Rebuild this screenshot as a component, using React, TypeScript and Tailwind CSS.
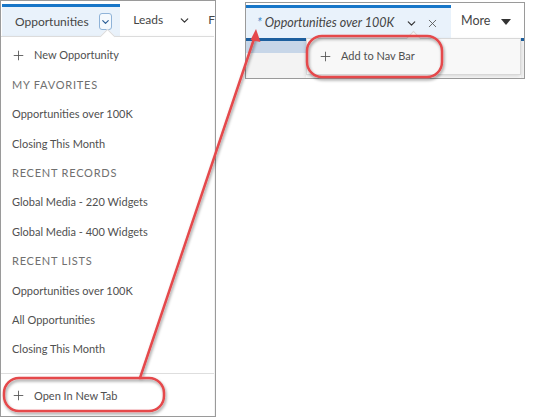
import { Plus, ChevronDown, X } from 'lucide-react'

const font = { fontFamily: 'Lato, "Open Sans", sans-serif' }

function Item({ label, plus }: { label: string; plus?: boolean }) {
  return (
    <div className="flex items-center h-[29.4px] px-[11px] text-[11px] text-[#505050]">
      {plus && <Plus className="w-[15px] h-[15px] ml-[-1px] mr-[8px] text-[#555]" strokeWidth={1.4} />}
      <span>{label}</span>
    </div>
  )
}

function Header({ label }: { label: string }) {
  return (
    <div className="flex items-center h-[29.4px] px-[11px] text-[11px] tracking-[0.07em] text-[#707070]">
      {label}
    </div>
  )
}

function LeftPanel() {
  return (
    <div className="w-[216px] h-[417px] border border-[#9a9a9a] bg-white flex flex-col overflow-hidden">
      {/* tab row */}
      <div className="h-[35px] pt-[3px] flex items-stretch shrink-0">
        <div className="w-[122px] ml-[1px] border-t-[3px] border-[#1776c8] bg-[#e9f2fb] flex items-center pl-[13px] gap-[10px]">
          <span className="text-[12px] text-[#454545]">Opportunities</span>
          <div className="w-[13px] h-[17px] rounded-[3px] border border-[#8fb3d8] bg-[#f5f9fd] flex items-center justify-center">
            <ChevronDown className="w-[12px] h-[12px] text-[#2a5d95]" strokeWidth={2.5} />
          </div>
        </div>
        <div className="flex items-center pl-[13px] text-[12px] text-[#454545]">
          <span>Leads</span>
          <ChevronDown className="ml-[15px] w-[13px] h-[13px] text-[#333]" strokeWidth={2.2} />
          <span className="ml-[17px]">F</span>
        </div>
      </div>
      {/* dropdown */}
      <div className="relative flex-1 flex flex-col border-t border-[#dcdcdc] mr-[1px] shadow-[0_2px_4px_rgba(0,0,0,0.12)]">
        <div className="absolute left-[101px] top-[-6px] w-[11px] h-[11px] rotate-45 bg-white border-l border-t border-[#dcdcdc]" />
        <div className="pt-[4px]">
          <Item label="New Opportunity" plus />
          <Header label="MY FAVORITES" />
          <Item label="Opportunities over 100K" />
          <Item label="Closing This Month" />
          <Header label="RECENT RECORDS" />
          <Item label="Global Media - 220 Widgets" />
          <Item label="Global Media - 400 Widgets" />
          <Header label="RECENT LISTS" />
          <Item label="Opportunities over 100K" />
          <Item label="All Opportunities" />
          <Item label="Closing This Month" />
        </div>
        <div className="mt-[9px] border-t border-[#dedede] pt-[7px]">
          <Item label="Open In New Tab" plus />
        </div>
      </div>
    </div>
  )
}

function RightPanel() {
  return (
    <div className="mt-[2px] w-[280px] h-[77px] border border-[#9a9a9a] bg-white flex flex-col overflow-hidden">
      <div className="h-[35px] pt-[2px] flex items-stretch shrink-0">
        <div className="w-[205px] border-t-[3px] border-[#1776c8] bg-[#e9f2fb] flex items-center pl-[11px]">
          <span className="text-[12.5px] italic text-[#454545]">
            <span className="text-[#3b82c4]">*</span> Opportunities over 100K
          </span>
          <ChevronDown className="ml-[11px] w-[13px] h-[13px] text-[#333]" strokeWidth={2.2} />
          <X className="ml-[8px] w-[13px] h-[13px] text-[#555]" strokeWidth={1.6} />
        </div>
        <div className="flex items-center pl-[10px] gap-[11px] text-[12.5px] text-[#454545]">
          <span>More</span>
          <svg width="10" height="6" viewBox="0 0 10 6"><path d="M0 0h10L5 6z" fill="#333" /></svg>
        </div>
      </div>
      <div className="relative flex-1 flex">
        <div className="w-[60px] flex flex-col">
          <div className="h-[3px] bg-[#1d5f9e]" />
          <div className="h-[12px] bg-[#c7d6e8]" />
          <div className="flex-1 bg-[#f3f3f3]" />
        </div>
        <div className="relative w-[215px] h-[37px] bg-[#f8f8f8] border border-[#d8d8d8] shadow-[0_2px_4px_rgba(0,0,0,0.15)] flex items-center pl-[11px] text-[11px] text-[#505050]">
          <div className="absolute left-[101px] top-[-6px] w-[11px] h-[11px] rotate-45 bg-[#f8f8f8] border-l border-t border-[#d8d8d8]" />
          <Plus className="w-[15px] h-[15px] mr-[8px] text-[#555]" strokeWidth={1.4} />
          <span>Add to Nav Bar</span>
        </div>
        <div className="flex-1 flex flex-col">
          <div className="h-[3px] bg-[#1d5f9e]" />
          <div className="flex-1 bg-[#f3f3f3]" />
        </div>
      </div>
    </div>
  )
}

export default function App() {
  return (
    <div className="relative w-[537px] h-[418px] bg-white" style={font}>
      <div className="flex items-start gap-[29px]">
        <LeftPanel />
        <RightPanel />
      </div>
      {/* annotations */}
      <svg className="absolute inset-0 pointer-events-none" width="537" height="418" viewBox="0 0 537 418">
        <defs>
          <filter id="sh" x="-20%" y="-20%" width="140%" height="160%">
            <feDropShadow dx="1" dy="2" stdDeviation="1.5" floodColor="#000" floodOpacity="0.4" />
          </filter>
        </defs>
        <g stroke="#e5484c" strokeWidth="2.5" fill="none" filter="url(#sh)">
          <rect x="4" y="378" width="160" height="33" rx="15" />
          <rect x="307" y="36" width="135" height="41" rx="15" />
          <line x1="140" y1="378" x2="255" y2="36" strokeLinecap="round" />
        </g>
        <path d="M256 29 L250.5 40 L260.5 42 Z" fill="#e5484c" />
      </svg>
    </div>
  )
}
